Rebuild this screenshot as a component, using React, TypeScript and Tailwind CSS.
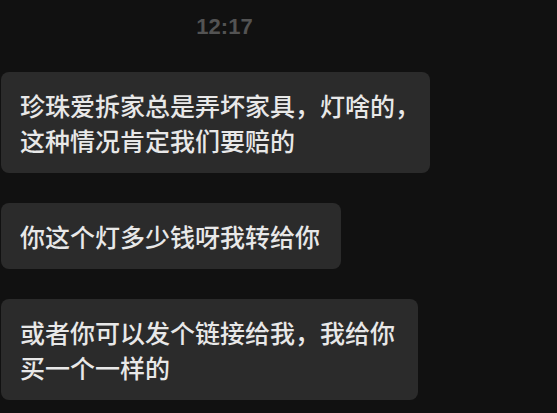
export default function App() {
  const messages = [
    { id: 1, lines: ["珍珠爱拆家总是弄坏家具，灯啥的，", "这种情况肯定我们要赔的"], width: "w-[429px]" },
    { id: 2, lines: ["你这个灯多少钱呀我转给你"], width: "w-[340px]" },
    { id: 3, lines: ["或者你可以发个链接给我，我给你", "买一个一样的"], width: "w-[417px]" },
  ]

  return (
    <div className="w-[557px] h-[413px] overflow-hidden bg-[#111111] font-['Noto_Sans_CJK_SC',sans-serif]">
      {/* Hora */}
      <div className="flex w-[449px] justify-center pt-[13px]">
        <span className="font-['Liberation_Sans',sans-serif] font-semibold text-[22px] leading-[28px] text-[#535353]">12:17</span>
      </div>

      {/* Mensajes */}
      <div className="flex flex-col gap-[30px] pt-[31px] pl-[1px]">
        {messages.map((m) => (
          <div
            key={m.id}
            className={`${m.width} rounded-[8px] bg-[#2b2b2b] pl-[19px] pt-[16px] pb-[15px] text-[25px] leading-[35px] font-medium text-[#e8e8e8] whitespace-nowrap`}
          >
            {m.lines.map((line, i) => (
              <div key={i}>{line}</div>
            ))}
          </div>
        ))}
      </div>
    </div>
  )
}
